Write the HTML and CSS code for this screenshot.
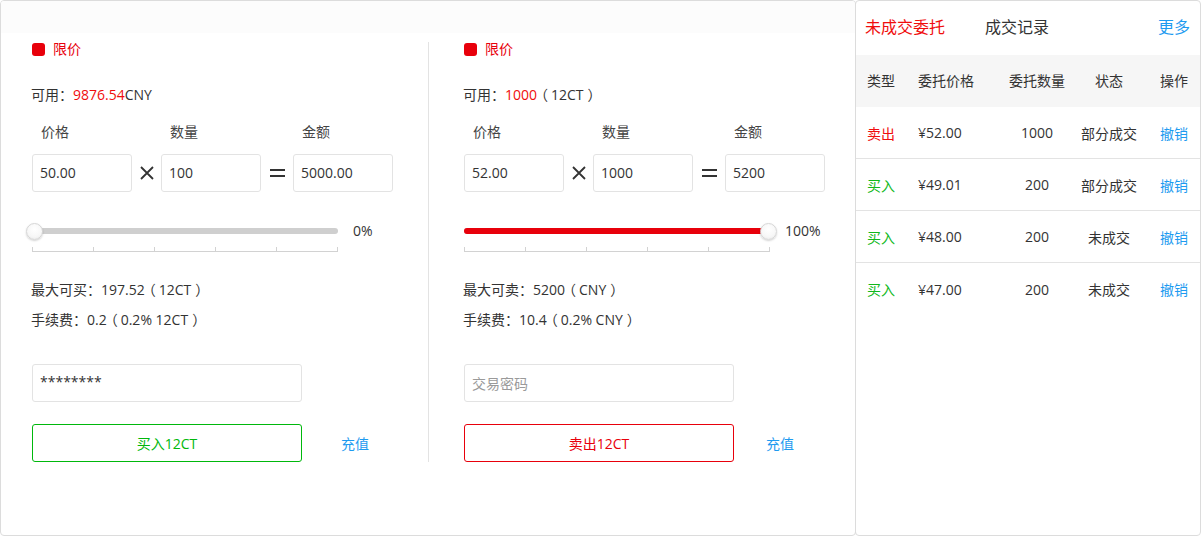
FILE: index.html
```html
<!DOCTYPE html>
<html lang="zh-CN">
<head>
<meta charset="utf-8">
<title>交易</title>
<link rel="stylesheet" href="styles.css">
</head>
<body>
<div class="page">
  <div class="trade-box">
    <div class="band"></div>
    <div class="cols">
      <div class="col col-buy">
        <div class="type"><span class="dot"></span><span>限价</span></div>
        <div class="avail">可用：<span class="red">9876.54</span>CNY</div>
        <div class="calc labels">
          <span class="lbl">价格</span><span class="op1"></span><span class="lbl">数量</span><span class="op2"></span><span class="lbl">金额</span>
        </div>
        <div class="calc">
          <div class="field">50.00</div>
          <span class="op1"><svg width="14" height="14" viewBox="0 0 14 14"><path d="M1 1L13 13M13 1L1 13" stroke="#333" stroke-width="1.8" fill="none"/></svg></span>
          <div class="field">100</div>
          <span class="op2"><svg width="15" height="10" viewBox="0 0 15 10"><path d="M0 2H15M0 8H15" stroke="#333" stroke-width="2" fill="none"/></svg></span>
          <div class="field">5000.00</div>
        </div>
        <div class="slider-row">
          <div class="slider">
            <div class="track"></div>
            <div class="knob knob-0"></div>
          </div>
          <span class="pct">0%</span>
        </div>
        <div class="ticks"><i></i><i></i><i></i><i></i><i></i><i></i></div>
        <div class="info first">最大可买：197.52<span class="paren">（</span>12CT<span class="paren">）</span></div>
        <div class="info">手续费：0.2<span class="paren">（</span>0.2% 12CT<span class="paren">）</span></div>
        <div class="pwd">********</div>
        <div class="action">
          <div class="btn btn-buy">买入12CT</div>
          <span class="link link-buy">充值</span>
        </div>
      </div>
      <div class="col col-sell">
        <div class="type"><span class="dot"></span><span>限价</span></div>
        <div class="avail">可用：<span class="red">1000</span><span class="paren">（</span>12CT<span class="paren">）</span></div>
        <div class="calc labels">
          <span class="lbl">价格</span><span class="op1"></span><span class="lbl">数量</span><span class="op2"></span><span class="lbl">金额</span>
        </div>
        <div class="calc">
          <div class="field">52.00</div>
          <span class="op1"><svg width="14" height="14" viewBox="0 0 14 14"><path d="M1 1L13 13M13 1L1 13" stroke="#333" stroke-width="1.8" fill="none"/></svg></span>
          <div class="field">1000</div>
          <span class="op2"><svg width="15" height="10" viewBox="0 0 15 10"><path d="M0 2H15M0 8H15" stroke="#333" stroke-width="2" fill="none"/></svg></span>
          <div class="field">5200</div>
        </div>
        <div class="slider-row">
          <div class="slider">
            <div class="track"><div class="fill"></div></div>
            <div class="knob knob-100"></div>
          </div>
          <span class="pct">100%</span>
        </div>
        <div class="ticks"><i></i><i></i><i></i><i></i><i></i><i></i></div>
        <div class="info first">最大可卖：5200<span class="paren">（</span>CNY<span class="paren">）</span></div>
        <div class="info">手续费：10.4<span class="paren">（</span>0.2% CNY<span class="paren">）</span></div>
        <div class="pwd placeholder">交易密码</div>
        <div class="action">
          <div class="btn btn-sell">卖出12CT</div>
          <span class="link link-sell">充值</span>
        </div>
      </div>
    </div>
  </div>
  <div class="orders">
    <div class="tabs">
      <span class="tab active">未成交委托</span>
      <span class="tab">成交记录</span>
      <span class="more">更多</span>
    </div>
    <div class="row head">
      <span class="c1">类型</span><span class="c2">委托价格</span><span class="c3">委托数量</span><span class="c4">状态</span><span class="c5">操作</span>
    </div>
    <div class="row">
      <span class="c1 red">卖出</span><span class="c2">¥52.00</span><span class="c3">1000</span><span class="c4">部分成交</span><span class="c5 blue">撤销</span>
    </div>
    <div class="row">
      <span class="c1 green">买入</span><span class="c2">¥49.01</span><span class="c3">200</span><span class="c4">部分成交</span><span class="c5 blue">撤销</span>
    </div>
    <div class="row">
      <span class="c1 green">买入</span><span class="c2">¥48.00</span><span class="c3">200</span><span class="c4">未成交</span><span class="c5 blue">撤销</span>
    </div>
    <div class="row last">
      <span class="c1 green">买入</span><span class="c2">¥47.00</span><span class="c3">200</span><span class="c4">未成交</span><span class="c5 blue">撤销</span>
    </div>
  </div>
</div>
</body>
</html>
```
FILE: styles.css
```css
* { box-sizing: border-box; }
html, body { margin: 0; padding: 0; background: #fff; }
body {
  font-family: "Open Sans", "Noto Sans CJK SC", sans-serif;
  font-size: 14px;
  color: #333;
}
.page { display: flex; width: 1201px; height: 536px; }
.red { color: #f00d0d; }
.green { color: #10b81c; }
.blue { color: #1e9bf0; }
.paren { font-feature-settings: "halt" 1; padding: 0 3px 0 4px; }

.trade-box {
  width: 856px;
  height: 536px;
  border: 1px solid #dcdcdc;
  border-radius: 4px;
  overflow: hidden;
}
.band { height: 32px; background: #fcfcfc; }
.cols { display: flex; margin-top: 9px; padding-left: 31px; }
.col { display: flex; flex-direction: column; }
.col-buy { width: 397px; border-right: 1px solid #e3e3e3; }
.col-sell { padding-left: 35px; }

.type { display: flex; align-items: center; height: 14px; line-height: 14px; color: #e8000b; }
.dot { width: 13px; height: 13px; border-radius: 3px; background: #e8000b; margin-right: 8px; }
.avail { margin-top: 29px; line-height: 20px; margin-left: -1px; }

.calc { display: flex; align-items: center; }
.labels { margin-top: 17px; line-height: 20px; color: #444; }
.labels .lbl { width: 100px; padding-left: 9px; }
.op1 { width: 29px; display: flex; justify-content: center; }
.op2 { width: 32px; display: flex; justify-content: center; }
.calc .field {
  width: 100px;
  height: 38px;
  border: 1px solid #e3e3e3;
  border-radius: 3px;
  padding-left: 7px;
  line-height: 36px;
}
.calc:not(.labels) { margin-top: 12px; }

.slider-row { display: flex; align-items: center; margin-top: 29px; height: 20px; }
.slider { position: relative; width: 306px; height: 20px; }
.track { position: absolute; left: 0; right: 0; top: 7px; height: 6px; border-radius: 3px; background: #cfcfcf; }
.fill { height: 100%; width: 100%; border-radius: 3px; background: #e8000b; }
.knob {
  position: absolute;
  top: 2px;
  width: 17px;
  height: 17px;
  border-radius: 50%;
  background: radial-gradient(circle at 50% 35%, #ffffff 0%, #f7f7f7 60%, #e6e6e6 100%);
  border: 1px solid #d6d6d6;
  box-shadow: 0 1px 2px rgba(0,0,0,0.18);
}
.knob-0 { left: -6px; }
.knob-100 { left: 296px; }
.pct { margin-left: 15px; line-height: 20px; }

.ticks {
  margin-top: 6px;
  width: 306px;
  height: 5px;
  display: flex;
  justify-content: space-between;
  border-bottom: 1px solid #d2d2d2;
}
.ticks i { display: block; width: 1px; height: 4px; background: #d2d2d2; }

.info { line-height: 20px; margin-left: -1px; }
.info.first { margin-top: 28px; }
.info + .info { margin-top: 10px; }

.pwd {
  margin-top: 34px;
  width: 270px;
  height: 38px;
  border: 1px solid #e3e3e3;
  border-radius: 3px;
  padding-left: 7px;
  line-height: 34px;
  color: #333;
}
.pwd.placeholder { line-height: 37px; color: #9a9a9a; }

.action { display: flex; align-items: center; margin-top: 22px; }
.btn {
  width: 270px;
  height: 38px;
  border-radius: 3px;
  display: flex;
  align-items: center;
  justify-content: center;
}
.btn-buy { border: 1px solid #00b80c; color: #00b80c; }
.btn-sell { border: 1px solid #e8000b; color: #e8000b; }
.link { color: #1e9bf0; }
.link-buy { margin-left: 39px; }
.link-sell { margin-left: 32px; }

.orders {
  width: 346px;
  height: 536px;
  margin-left: -1px;
  border: 1px solid #dcdcdc;
  border-radius: 4px;
  overflow: hidden;
}
.tabs { display: flex; align-items: center; height: 54px; padding: 0 10px 4px 9px; font-size: 16px; }
.tab { color: #333; }
.tab.active { color: #f00d0d; margin-right: 40px; }
.more { margin-left: auto; color: #1e9bf0; }

.row {
  display: grid;
  grid-template-columns: 62px 80px 78px 66px 1fr;
  align-items: center;
  height: 52px;
  border-bottom: 1px solid #e3e3e3;
}
.row.head { background: #f6f6f6; border-bottom: none; padding-bottom: 2px; }
.row.last { border-bottom: none; }
.c1 { padding-left: 11px; }
.c3 { text-align: center; }
.c4 { text-align: center; }
.c5 { padding-left: 18px; }
```
